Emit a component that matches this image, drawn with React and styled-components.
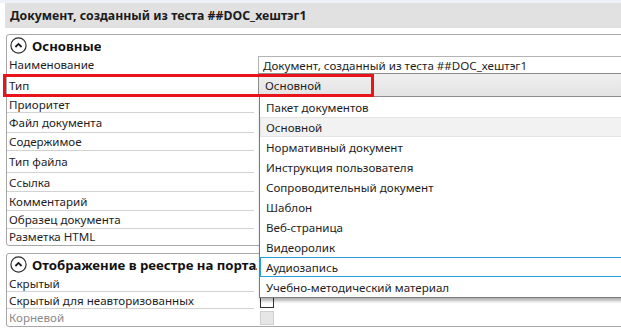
import React from "react";
import styled, { createGlobalStyle } from "styled-components";

const GlobalStyle = createGlobalStyle`
  html, body {
    margin: 0;
    padding: 0;
    background: #ffffff;
  }
  body {
    font-family: "Noto Sans", "Open Sans", sans-serif;
    font-size: 11.6px;
    color: #1e1e1e;
  }
`;

const mainRows = [
  { label: "Приоритет", h: 16 },
  { label: "Файл документа", h: 20 },
  { label: "Содержимое", h: 18 },
  { label: "Тип файла", h: 22 },
  { label: "Ссылка", h: 19 },
  { label: "Комментарий", h: 19 },
  { label: "Образец документа", h: 18 },
  { label: "Разметка HTML", h: 16, last: true },
];

const options = [
  "Пакет документов",
  "Основной",
  "Нормативный документ",
  "Инструкция пользователя",
  "Сопроводительный документ",
  "Шаблон",
  "Веб-страница",
  "Видеоролик",
  "Аудиозапись",
  "Учебно-методический материал",
];

const CollapseIcon = () => (
  <svg width="17" height="17" viewBox="0 0 17 17">
    <circle cx="8.5" cy="8.5" r="7.6" fill="none" stroke="#2b2b2b" strokeWidth="1.2" />
    <path d="M5.4 10 L8.5 6.9 L11.6 10" fill="none" stroke="#1a1a1a" strokeWidth="1.8" />
  </svg>
);

const App = () => {
  return (
    <>
      <GlobalStyle />
      <Screen>
        <TopStrip />
        <TitleBar>Документ, созданный из теста ##DOC_хештэг1</TitleBar>

        <Group>
          <GroupHeader>
            <CollapseIcon />
            <GroupTitle>Основные</GroupTitle>
          </GroupHeader>
          <Row $h={18}>
            <Label>Наименование</Label>
            <TextValue>Документ, созданный из теста ##DOC_хештэг1</TextValue>
          </Row>
          <Row $h={23}>
            <Label $line>Тип</Label>
            <ComboValue>Основной</ComboValue>
          </Row>
          {mainRows.map((r) => (
            <Row key={r.label} $h={r.h}>
              <Label $line={!r.last}>{r.label}</Label>
              <Value />
            </Row>
          ))}
        </Group>

        <Group $second>
          <GroupHeader>
            <CollapseIcon />
            <GroupTitle $clip>Отображение в реестре на портале</GroupTitle>
          </GroupHeader>
          <Row $h={17}>
            <Label $line>Скрытый</Label>
            <Value>
              <Check />
            </Value>
          </Row>
          <Row $h={17}>
            <Label $line>Скрытый для неавторизованных</Label>
            <Value>
              <Check />
            </Value>
          </Row>
          <Row $h={17}>
            <Label $disabled>Корневой</Label>
            <Value>
              <Check $disabled />
            </Value>
          </Row>
        </Group>

        <Highlight />

        <Dropdown>
          {options.map((o, i) => (
            <Option key={o} $selected={i === 1} $hover={i === 8}>
              {o}
            </Option>
          ))}
        </Dropdown>
      </Screen>
    </>
  );
};

export default App;

const Screen = styled.div`
  position: relative;
  width: 621px;
  height: 331px;
  overflow: hidden;
  background: #ffffff;
`;

const TopStrip = styled.div`
  height: 3px;
  background: #eef2f8;
`;

const TitleBar = styled.div`
  margin-left: 5px;
  height: 25px;
  display: flex;
  align-items: center;
  padding-left: 5px;
  background: #e1e1e1;
  font-weight: 700;
  font-size: 12.3px;
  color: #1b1b1b;
`;

const Group = styled.div`
  margin: ${(p) => (p.$second ? "7px" : "6px")} 0 0 6px;
  width: 640px;
  border: 1px solid #a8a8a8;
  border-radius: 3px;
  display: flex;
  flex-direction: column;
`;

const GroupHeader = styled.div`
  height: 21px;
  display: flex;
  align-items: center;
  gap: 5px;
  padding-left: 3px;
`;

const GroupTitle = styled.span`
  font-weight: 700;
  font-size: 13.2px;
  color: #111;
  white-space: nowrap;
  overflow: hidden;
  max-width: ${(p) => (p.$clip ? "225px" : "none")};
`;

const Row = styled.div`
  display: grid;
  grid-template-columns: 251px 1fr;
  height: ${(p) => p.$h}px;
`;

const Label = styled.div`
  display: flex;
  align-items: center;
  padding-left: 2px;
  border-bottom: 1px solid ${(p) => (p.$line ? "#d2d2d2" : "transparent")};
  margin-right: 4px;
  white-space: nowrap;
  color: ${(p) => (p.$disabled ? "#8a8a8a" : "#1e1e1e")};
`;

const Value = styled.div`
  display: flex;
  align-items: center;
  padding-left: 2px;
`;

const TextValue = styled.div`
  display: flex;
  align-items: center;
  padding-left: 4px;
  border-top: 1px solid #b4b4b4;
  border-left: 1px solid #b4b4b4;
  white-space: nowrap;
`;

const ComboValue = styled.div`
  display: flex;
  align-items: center;
  padding-left: 6px;
  margin-top: -1px;
  height: 22px;
  border-top: 1px solid #8c8c8c;
  border-bottom: 1px solid #8c8c8c;
  border-left: 1px solid #8c8c8c;
  background: linear-gradient(#f0f0f0, #e3e3e3);
`;

const Check = styled.div`
  width: 12px;
  height: 12px;
  border: 1px solid ${(p) => (p.$disabled ? "#cfcfcf" : "#333")};
  background: ${(p) => (p.$disabled ? "#e6e6e6" : "#fff")};
`;

const Highlight = styled.div`
  position: absolute;
  left: 3px;
  top: 74px;
  width: 365px;
  height: 17px;
  border: 3px solid #e8141b;
  pointer-events: none;
`;

const Dropdown = styled.div`
  position: absolute;
  left: 259px;
  top: 97px;
  width: 380px;
  background: #ffffff;
  border-left: 1px solid #7a7a7a;
  border-bottom: 1px solid #7a7a7a;
  box-shadow: 1px 3px 3px rgba(0, 0, 0, 0.3);
  display: flex;
  flex-direction: column;
`;

const Option = styled.div`
  height: 18px;
  display: flex;
  align-items: center;
  padding-left: 5px;
  border: 1px solid
    ${(p) => (p.$hover ? "#26a0da" : p.$selected ? "#e4e4e4" : "transparent")};
  border-right: none;
  background: ${(p) => (p.$selected ? "#f2f2f2" : "#ffffff")};
  white-space: nowrap;
`;
